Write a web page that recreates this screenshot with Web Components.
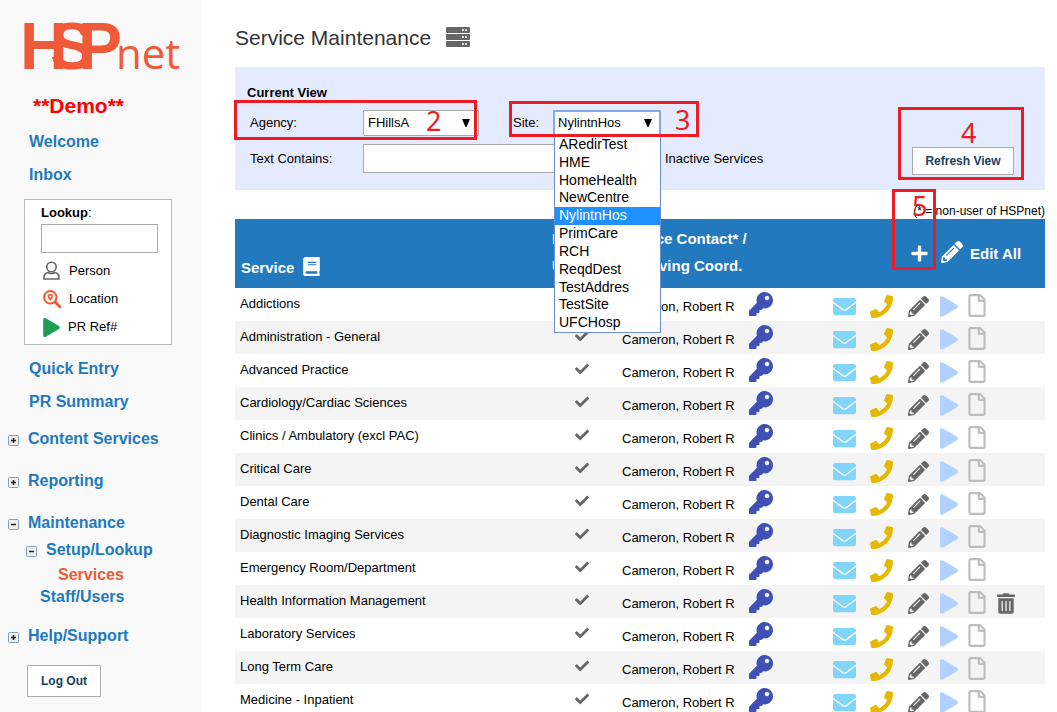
<!DOCTYPE html>
<html lang="en">
<head>
<meta charset="utf-8">
<meta name="viewport" content="width=device-width, initial-scale=1">
<title>HSPnet - Service Maintenance</title>
<style>
  html { scrollbar-width: none; }
  body {
    margin: 0;
    background: #fff;
    color: #000;
    font: 13px/20px "Liberation Sans", Arial, sans-serif;
  }
</style>
</head>
<body>
<app-shell>
  <side-nav slot="nav"></side-nav>
  <page-title>Service Maintenance</page-title>
  <view-filter></view-filter>
  <service-table></service-table>
</app-shell>

<script>
const ICONS = {
  check: ['0 0 512 512', '<path d="M173.898 439.404l-166.4-166.4c-9.997-9.997-9.997-26.206 0-36.204l36.203-36.204c9.997-9.998 26.207-9.998 36.204 0L192 312.69 432.095 72.596c9.997-9.997 26.207-9.997 36.204 0l36.203 36.204c9.997 9.997 9.997 26.206 0 36.204l-294.4 294.401c-9.998 9.997-26.207 9.997-36.204-.001z"/>'],
  key: ['0 0 512 512', '<path d="M512 176.001C512 273.203 433.202 352 336 352c-11.22 0-22.19-1.062-32.827-3.069l-24.012 27.014A23.999 23.999 0 0 1 261.223 384H224v40c0 13.255-10.745 24-24 24h-40v40c0 13.255-10.745 24-24 24H24c-13.255 0-24-10.745-24-24v-78.059c0-6.365 2.529-12.47 7.029-16.971l161.802-161.802C163.108 213.814 160 195.271 160 176 160 78.798 238.797.001 335.999 0 433.488-.001 512 78.511 512 176.001zM336 128c0 26.51 21.49 48 48 48s48-21.49 48-48-21.49-48-48-48-48 21.49-48 48z"/>'],
  mail: ['0 0 512 512', '<path d="M502.3 190.8c3.9-3.1 9.7-.2 9.7 4.7V400c0 26.5-21.5 48-48 48H48c-26.5 0-48-21.5-48-48V195.6c0-5 5.7-7.8 9.7-4.7 22.4 17.4 52.1 39.5 154.1 113.6 21.1 15.4 56.7 47.8 92.2 47.6 35.7.3 72-32.8 92.3-47.6 102-74.1 131.6-96.3 154-113.7zM256 320c23.2.4 56.6-29.2 73.4-41.4 132.7-96.3 142.8-104.7 173.4-128.7 5.8-4.5 9.2-11.5 9.2-18.9v-19c0-26.5-21.5-48-48-48H48c-26.5 0-48 21.5-48 48v19c0 7.4 3.4 14.3 9.2 18.9 30.6 23.9 40.7 32.4 173.4 128.7 16.8 12.2 50.2 41.8 73.4 41.4z"/>'],
  phone: ['0 0 512 512', '<path d="M493.4 24.6l-104-24c-11.3-2.6-22.9 3.3-27.5 13.9l-48 112c-4.2 9.8-1.4 21.3 6.9 28l60.6 49.6c-36 76.7-98.9 140.5-177.2 177.2l-49.6-60.6c-6.8-8.3-18.2-11.1-28-6.9l-112 48C3.9 366.5-2 378.1.6 389.4l24 104C27.1 504.2 36.7 512 48 512c256.1 0 464-207.5 464-464 0-11.2-7.7-20.9-18.6-23.4z"/>'],
  pencil: ['0 0 512 512', '<path d="M497.9 142.1l-46.1 46.1c-4.7 4.7-12.3 4.7-17 0l-111-111c-4.7-4.7-4.7-12.3 0-17l46.1-46.1c18.7-18.7 49.1-18.7 67.9 0l60.1 60.1c18.8 18.7 18.8 49.1 0 67.9zM284.2 99.8L21.6 362.4.4 483.9c-2.9 16.4 11.4 30.6 27.8 27.8l121.5-21.3 262.6-262.6c4.7-4.7 4.7-12.3 0-17l-111-111c-4.8-4.7-12.4-4.7-17.1 0zM124.1 339.9c-5.5-5.5-5.5-14.3 0-19.8l154-154c5.5-5.5 14.3-5.5 19.8 0s5.5 14.3 0 19.8l-154 154c-5.5 5.5-14.3 5.5-19.8 0zM88 424h48v36.3l-64.5 11.3-31.1-31.1L51.7 376H88v48z"/>'],
  play: ['0 0 448 512', '<path d="M424.4 214.7L72.4 6.6C43.8-10.3 0 6.1 0 47.9V464c0 37.5 40.7 60.1 72.4 41.3l352-208c31.4-18.5 31.5-64.1 0-82.6z"/>'],
  file: ['0 0 384 512', '<path d="M369.9 97.9L286 14C277 5 264.8-.1 252.1-.1H48C21.5 0 0 21.5 0 48v416c0 26.5 21.5 48 48 48h288c26.5 0 48-21.5 48-48V131.9c0-12.7-5.1-25-14.1-34zM332.1 128H256V51.9l76.1 76.1zM48 464V48h160v104c0 13.3 10.7 24 24 24h104v288H48z"/>'],
  trash: ['0 0 448 512', '<path d="M32 464a48 48 0 0 0 48 48h288a48 48 0 0 0 48-48V128H32zm272-256a16 16 0 0 1 32 0v224a16 16 0 0 1-32 0zm-96 0a16 16 0 0 1 32 0v224a16 16 0 0 1-32 0zm-96 0a16 16 0 0 1 32 0v224a16 16 0 0 1-32 0zM432 32H312l-9.4-18.7A24 24 0 0 0 281.1 0H166.8a23.72 23.72 0 0 0-21.4 13.3L136 32H16A16 16 0 0 0 0 48v32a16 16 0 0 0 16 16h416a16 16 0 0 0 16-16V48a16 16 0 0 0-16-16z"/>'],
  book: ['0 0 448 512', '<path d="M448 360V24c0-13.3-10.7-24-24-24H64C28 0 0 28 0 64v384c0 36 28 64 64 64h360c13.3 0 24-10.7 24-24v-16c0-7.5-3.5-14.3-8.9-18.7-4.2-15.4-4.2-59.3 0-74.7 5.4-4.3 8.9-11.1 8.9-18.6zM128 134c0-3.3 2.7-6 6-6h212c3.3 0 6 2.7 6 6v20c0 3.3-2.7 6-6 6H134c-3.3 0-6-2.7-6-6v-20zm0 64c0-3.3 2.7-6 6-6h212c3.3 0 6 2.7 6 6v20c0 3.3-2.7 6-6 6H134c-3.3 0-6-2.7-6-6v-20zm253.4 250H96c-17.7 0-32-14.3-32-32 0-17.6 14.4-32 32-32h285.4c-1.9 17.1-1.9 46.9 0 64z"/>'],
  plus: ['0 0 16 16', '<path d="M6.4 1.4a1 1 0 0 1 1-1h1.2a1 1 0 0 1 1 1v5h5a1 1 0 0 1 1 1v1.2a1 1 0 0 1-1 1h-5v5a1 1 0 0 1-1 1H7.400a1 1 0 0 1-1-1v-5h-5a1 1 0 0 1-1-1V7.400a1 1 0 0 1 1-1h5z"/>'],
  server: ['0 0 24 21', '<rect y="0" width="24" height="6" rx="1"/><rect y="7" width="24" height="6" rx="1"/><rect y="14" width="24" height="6" rx="1"/><g fill="#fff"><circle cx="17" cy="3" r="1"/><circle cx="20" cy="3" r="1"/><circle cx="17" cy="10" r="1"/><circle cx="20" cy="10" r="1"/><circle cx="17" cy="17" r="1"/><circle cx="20" cy="17" r="1"/></g>'],
  person: ['0 0 18 20', '<g fill="none" stroke="currentColor" stroke-width="1.600"><circle cx="8.500" cy="6" r="4.700"/><path d="M5 11.500C2.500 12 1 14 1 16.500V18h15v-1.500c0-2.500-1.500-4.500-4-5-2 1.200-5 1.200-7 0z"/></g>'],
  location: ['0 0 18 18', '<g fill="none" stroke="currentColor"><circle cx="7.300" cy="7.300" r="6.200" stroke-width="2"/><path d="M12.300 12.300l4.500 4.500" stroke-width="3" stroke-linecap="round"/></g><path fill-rule="evenodd" d="M7.300 3.800a2.600 2.600 0 0 1 2.600 2.700c0 1.500-1.400 2.900-2.600 4.600-1.200-1.700-2.600-3.100-2.600-4.600a2.600 2.600 0 0 1 2.600-2.700zm0 1.700a1 1 0 1 0 0 2 1 1 0 0 0 0-2z"/>'],
  arrow: ['0 0 8 8', '<path d="M0 0h8L4.500 8h-1z"/>']
};

function define(name, html, setup) {
  const template = document.createElement('template');
  template.innerHTML = html;
  customElements.define(name, class extends HTMLElement {
    constructor() {
      super();
      this.attachShadow({ mode: 'open' });
    }
    connectedCallback() {
      if (this.shadowRoot.childNodes.length) return;
      this.shadowRoot.append(template.content.cloneNode(true));
      if (setup) setup.call(this, this.shadowRoot);
    }
  });
}

/* Icon: <ui-icon name="key">, sized by the width and height of its host. */
define('ui-icon', `
  <style>
    :host { display: block; flex: none; width: 24px; height: 24px; }
    svg { display: block; width: 100%; height: 100%; fill: currentColor; }
  </style>
  <svg aria-hidden="true"></svg>`, function (root) {
  const [box, shape] = ICONS[this.getAttribute('name')];
  const svg = root.querySelector('svg');
  svg.setAttribute('viewBox', box);
  svg.innerHTML = shape;
});

/* Numbered red frame laid over the part of the page it points out. */
define('step-mark', `
  <style>
    :host {
      position: absolute; z-index: 5; box-sizing: border-box;
      border: 3px solid #ec1c24; color: #ec1c24; pointer-events: none;
      font: 27px/28px "Noto Sans", "Open Sans", sans-serif;
      display: flex; align-items: flex-start;
    }
  </style>
  <slot></slot>`);

define('app-shell', `
  <style>
    :host { display: flex; min-height: 100vh; }
    main { flex: 1; min-width: 0; padding: 24px 12px 0 33px; }
  </style>
  <slot name="nav"></slot>
  <main><slot></slot></main>`);

define('page-title', `
  <style>
    :host { display: flex; align-items: center; gap: 15px; margin-bottom: 15px; color: #333; }
    h1 { margin: 0; font-size: 21px; line-height: 28px; font-weight: 400; }
    ui-icon { width: 24px; height: 21px; color: #666; margin-bottom: 2px; }
  </style>
  <h1><slot></slot></h1>
  <ui-icon name="server"></ui-icon>`);

/* Wordmark: the three heavy letters interlock, the light ones follow. */
define('brand-logo', `
  <style>
    :host { display: block; width: 160px; height: 50px; color: #f15a38; }
    svg { display: block; width: 100%; height: 100%; overflow: visible; fill: currentColor; }
    .strong { font: 700 66px "Liberation Sans", Arial, sans-serif; }
    .light { font: 400 42px "Open Sans", "Noto Sans", sans-serif; }
  </style>
  <svg viewBox="0 0 160 50" role="img" aria-label="HSPnet"><text y="47"><tspan class="strong" x="-4">H</tspan><tspan class="strong" x="26">S</tspan><tspan class="strong" x="54">P</tspan><tspan class="light" x="92">net</tspan></text></svg>`);

define('lookup-box', `
  <style>
    :host { display: block; box-sizing: border-box; width: 148px; height: 146px; padding: 3px 13px 0 16px; border: 1px solid #bbb; background: #fff; }
    label { display: block; font-weight: 700; }
    label span { font-weight: 400; }
    input { display: block; box-sizing: border-box; width: 100%; height: 29px; border: 1px solid #aaa; background: #fff; margin: 1px 0 4px; }
    a { display: flex; align-items: center; gap: 8px; height: 28px; margin-left: 2px; color: #000; text-decoration: none; }
    ui-icon { width: 18px; height: 18px; }
    .person { color: #666; height: 20px; }
    .location { color: #f15a38; }
    .ref { color: #1f9d55; width: 17px; height: 19px; }
  </style>
  <label for="q">Lookup<span>:</span></label>
  <input id="q" type="text">
  <a href="#person"><ui-icon class="person" name="person"></ui-icon>Person</a>
  <a href="#location"><ui-icon class="location" name="location"></ui-icon>Location</a>
  <a href="#ref"><ui-icon class="ref" name="play"></ui-icon>PR Ref#</a>`);

define('tree-toggle', `
  <style>
    :host { display: block; flex: none; }
    button { display: block; padding: 0; border: 0; background: none; width: 11px; height: 11px; }
    svg { display: block; }
    :host([open]) .bar { display: none; }
  </style>
  <button type="button" aria-label="Toggle section">
    <svg width="11" height="11" viewBox="0 0 11 11">
      <rect x=".5" y=".5" width="10" height="10" rx="1" fill="#f0eee8" stroke="#7fa3c7"/>
      <path d="M3 5.500h5" stroke="#222" stroke-width="1.500"/>
      <path class="bar" d="M5.500 3v5" stroke="#222" stroke-width="1.500"/>
    </svg>
  </button>`);

define('plain-button', `
  <style>
    :host { display: block; }
    button {
      display: block; box-sizing: border-box; width: 100%; height: 100%; padding: 0;
      border: 1px solid #aaa; background: #fff; color: #16425f;
      font: 700 12px/16px "Liberation Sans", Arial, sans-serif; white-space: nowrap;
    }
  </style>
  <button type="button"><slot></slot></button>`);

define('side-nav', `
  <style>
    :host { display: block; flex: none; box-sizing: border-box; width: 202px; padding: 22px 0 15px; background: #f9f9f9; }
    brand-logo { margin-left: 24px; }
    .demo { margin: 22px 0 14px 33px; color: #f00; font-size: 21px; line-height: 24px; font-weight: 700; }
    a { color: #2279bd; font-size: 16px; line-height: 20px; font-weight: 700; text-decoration: none; }
    .links { display: grid; gap: 13px; padding-left: 29px; justify-items: start; }
    lookup-box { margin: 14px 0 14px 24px; }
    .node { display: flex; align-items: center; gap: 9px; padding-left: 8px; margin-top: 22px; }
    .node tree-toggle { margin-top: 3px; }
    .first { margin-top: 17px; }
    .sub { padding-left: 26px; margin-top: 7px; }
    .leaf { display: block; margin: 5px 0 2px 58px; }
    .leaf[aria-current] { color: #f15a38; }
    .staff { display: block; margin: 0 0 19px 40px; }
    .last { margin-top: 0; }
    plain-button { width: 74px; height: 32px; margin: 19px 0 0 27px; }
  </style>
  <brand-logo></brand-logo>
  <div class="demo">**Demo**</div>
  <nav aria-label="Main">
    <div class="links"><a href="#welcome">Welcome</a><a href="#inbox">Inbox</a></div>
    <lookup-box></lookup-box>
    <div class="links"><a href="#quick">Quick Entry</a><a href="#summary">PR Summary</a></div>
    <div class="node first"><tree-toggle></tree-toggle><a href="#content">Content Services</a></div>
    <div class="node"><tree-toggle></tree-toggle><a href="#reporting">Reporting</a></div>
    <div class="node"><tree-toggle open></tree-toggle><a href="#maintenance">Maintenance</a></div>
    <div class="node sub"><tree-toggle open></tree-toggle><a href="#setup">Setup/Lookup</a></div>
    <a class="leaf" href="#services" aria-current="page">Services</a>
    <a class="staff" href="#staff">Staff/Users</a>
    <div class="node last"><tree-toggle></tree-toggle><a href="#help">Help/Support</a></div>
  </nav>
  <plain-button>Log Out</plain-button>`);

/* Labelled drop-down; with the "open" attribute its list of choices is shown below. */
define('drop-down', `
  <style>
    :host { display: flex; align-items: center; }
    label { flex: none; width: var(--label, 113px); }
    .box { position: relative; width: var(--box, 116px); }
    select {
      display: block; box-sizing: border-box; width: 100%; height: 26px; margin: 0; padding: 0 4px;
      appearance: none; border: 1px solid #aaa; border-radius: 1px; background: #fff; color: #000;
      font: 13px/20px "Liberation Sans", Arial, sans-serif;
    }
    ui-icon { position: absolute; right: 9px; top: 9px; width: 8px; height: 8px; pointer-events: none; }
    ul {
      position: absolute; z-index: 3; top: 25px; left: 1px; right: 0; height: 198px; box-sizing: border-box;
      display: grid; grid-auto-rows: 1fr; margin: 0; padding: 0; list-style: none;
      border: 1px solid #6a8cd0; background: #fff; font-size: 14px; line-height: 17px;
    }
    li { padding-left: 4px; }
    li[aria-selected="true"] { background: #1e90ff; color: #fff; }
    :host(:not([open])) ul { display: none; }
    :host([open]) select { border: 2px solid #84a8ea; padding: 0 3px; }
  </style>
  <label for="s"></label>
  <div class="box">
    <select id="s"></select>
    <ui-icon name="arrow"></ui-icon>
    <ul role="listbox"></ul>
  </div>`, function (root) {
  const value = this.getAttribute('value');
  root.querySelector('label').textContent = this.getAttribute('label');
  const select = root.querySelector('select');
  const list = root.querySelector('ul');
  list.setAttribute('aria-label', this.getAttribute('label'));
  for (const text of this.getAttribute('options').split(',')) {
    select.add(new Option(text, text, false, text === value));
    if (!this.hasAttribute('open')) continue;
    const item = document.createElement('li');
    item.setAttribute('role', 'option');
    item.setAttribute('aria-selected', String(text === value));
    item.textContent = text;
    list.append(item);
  }
});

define('view-filter', `
  <style>
    :host { display: block; position: relative; padding: 17px 31px 17px 12px; background: #e5ebff; }
    h2 { margin: 0 0 8px; font-size: 13px; line-height: 18px; font-weight: 700; }
    .body { display: flex; justify-content: space-between; align-items: flex-end; }
    .fields { display: grid; gap: 8px; padding-left: 3px; }
    .row { display: flex; align-items: center; }
    .row > label { flex: none; width: 113px; }
    .site { --label: 40px; --box: 108px; margin-left: 34px; }
    input[type="text"] { box-sizing: border-box; width: 232px; height: 29px; border: 1px solid #aaa; background: #fff; }
    .row > .inactive { display: flex; align-items: center; gap: 5px; width: auto; margin-left: 52px; }
    .inactive input { margin: 0; }
    plain-button { width: 102px; height: 28px; margin-bottom: -2px; }
    .two { left: -1px; top: 33px; width: 243px; height: 40px; padding-left: 189px; padding-top: 4px; }
    .three { left: 274px; top: 34px; width: 190px; height: 36px; padding-left: 163px; padding-top: 2px; }
    .four { right: 21px; top: 40px; width: 126px; height: 73px; padding-left: 60px; padding-top: 9px; }
  </style>
  <h2>Current View</h2>
  <div class="body">
    <div class="fields">
      <div class="row">
        <drop-down label="Agency:" value="FHillsA" options="FHillsA"></drop-down>
        <drop-down class="site" open label="Site:" value="NylintnHos" options="ARedirTest,HME,HomeHealth,NewCentre,NylintnHos,PrimCare,RCH,ReqdDest,TestAddres,TestSite,UFCHosp"></drop-down>
      </div>
      <div class="row">
        <label for="text">Text Contains:</label>
        <input id="text" type="text">
        <label class="inactive"><input type="checkbox">Inactive Services</label>
      </div>
    </div>
    <plain-button>Refresh View</plain-button>
  </div>
  <step-mark class="two">2</step-mark>
  <step-mark class="three">3</step-mark>
  <step-mark class="four">4</step-mark>`);

define('service-table', `
  <style>
    :host { display: block; position: relative; padding-top: 13px; }
    .note { font-size: 12px; line-height: 16px; text-align: right; }
    table { width: 100%; table-layout: fixed; border-collapse: collapse; }
    .use { width: 64px; } .contact { width: 211px; } .actions { width: 220px; }
    th { height: 69px; box-sizing: border-box; padding: 0; background: #2279bd; color: #fff; font-size: 15px; line-height: 27px; text-align: left; }
    th.service { vertical-align: bottom; padding: 0 0 7px 6px; }
    th.service div { display: flex; align-items: center; gap: 9px; }
    th.service ui-icon { width: 17px; height: 19px; margin-bottom: 2px; }
    th.inuse { padding: 0 0 3px 2px; }
    th.coord { padding: 0 0 3px 5px; }
    th.tools { padding-left: 86px; }
    th.tools div { display: flex; align-items: center; white-space: nowrap; }
    th .add { width: 17px; height: 17px; }
    th .edit { width: 22px; height: 22px; margin-bottom: 3px; }
    button { display: block; padding: 0; border: 0; background: none; color: inherit; font: inherit; }
    .all { display: flex; align-items: center; gap: 7px; margin-left: 13px; }
    td { height: 33px; box-sizing: border-box; padding: 0; vertical-align: top; }
    tbody tr:nth-child(even) { background: #f4f4f4; }
    td.name { padding: 6px 0 0 5px; }
    td.mark { padding: 8px 0 0 25px; color: #666; }
    td.mark ui-icon { width: 14px; height: 14px; }
    td.who { padding: 3px 0 0 8px; }
    td.who div { display: grid; grid-template-columns: 127px 24px; }
    td.who span { padding-top: 6px; }
    .key { color: #3f51b5; }
    td.act { padding: 6px 0 0 8px; }
    td.act div { display: grid; grid-template-columns: 37px 38px 32px 28px 29px 18px; align-items: center; height: 25px; }
    .mail { width: 23px; height: 23px; color: #81d4fa; }
    .phone { width: 23px; height: 23px; color: #e6b800; }
    .pencil { width: 21px; height: 21px; color: #666; }
    .play { width: 18px; height: 21px; color: #b3d1ff; }
    .file { width: 18px; height: 23px; margin-bottom: 2px; color: #bdbdbd; }
    .trash { width: 18px; height: 21px; color: #666; }
    step-mark { right: 109px; top: -1px; width: 44px; height: 81px; padding-left: 17px; }
  </style>
  <div class="note">(* = non-user of HSPnet)</div>
  <table>
    <colgroup><col><col class="use"><col class="contact"><col class="actions"></colgroup>
    <thead><tr>
      <th class="service" scope="col"><div>Service <ui-icon name="book"></ui-icon></div></th>
      <th class="inuse" scope="col">In<br>Use</th>
      <th class="coord" scope="col">Service Contact* /<br>Receiving Coord.</th>
      <th class="tools" scope="col"><div>
        <button type="button" aria-label="Add service"><ui-icon class="add" name="plus"></ui-icon></button>
        <button type="button" class="all"><ui-icon class="edit" name="pencil"></ui-icon>Edit All</button>
      </div></th>
    </tr></thead>
    <tbody></tbody>
  </table>
  <step-mark>5</step-mark>`, function (root) {
  const services = [
    'Addictions', 'Administration - General', 'Advanced Practice', 'Cardiology/Cardiac Sciences',
    'Clinics / Ambulatory (excl PAC)', 'Critical Care', 'Dental Care', 'Diagnostic Imaging Services',
    'Emergency Room/Department', 'Health Information Management', 'Laboratory Services',
    'Long Term Care', 'Medicine - Inpatient'
  ];
  const removable = 'Health Information Management';
  const action = (name) => `<button type="button" aria-label="${name}"><ui-icon class="${name}" name="${name}"></ui-icon></button>`;
  root.querySelector('tbody').innerHTML = services.map((service) => {
    const names = ['mail', 'phone', 'pencil', 'play', 'file'];
    if (service === removable) names.push('trash');
    return `<tr>
      <td class="name">${service}</td>
      <td class="mark"><ui-icon name="check"></ui-icon></td>
      <td class="who"><div><span>Cameron, Robert R</span>${action('key')}</div></td>
      <td class="act"><div>${names.map(action).join('')}</div></td>
    </tr>`;
  }).join('');
});
</script>
</body>
</html>
